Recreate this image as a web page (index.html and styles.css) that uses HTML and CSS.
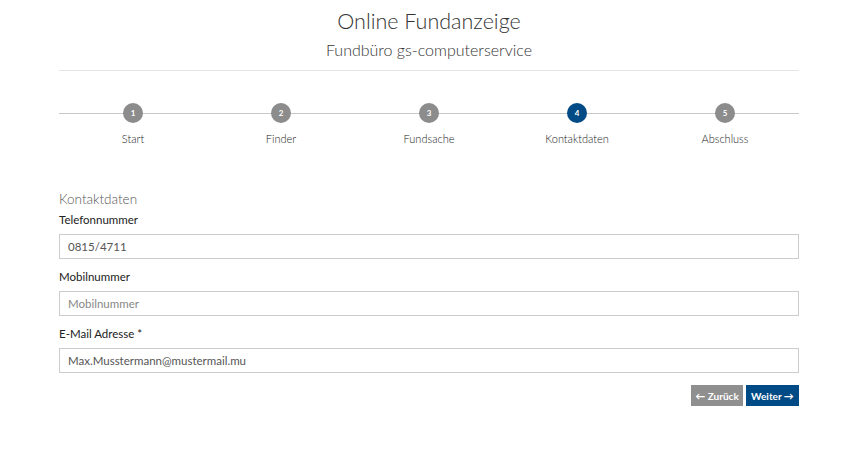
FILE: index.html
```html
<!DOCTYPE html>
<html lang="de">
<head>
<meta charset="utf-8">
<title>Online Fundanzeige</title>
<link rel="stylesheet" href="styles.css">
</head>
<body>
<div class="page">
  <header class="head">
    <h1 class="title">Online Fundanzeige</h1>
    <h2 class="subtitle">Fundbüro gs-computerservice</h2>
  </header>
  <hr class="rule">
  <ol class="steps">
    <li class="step"><span class="dot">1</span><span class="step-label">Start</span></li>
    <li class="step"><span class="dot">2</span><span class="step-label">Finder</span></li>
    <li class="step"><span class="dot">3</span><span class="step-label">Fundsache</span></li>
    <li class="step active"><span class="dot">4</span><span class="step-label">Kontaktdaten</span></li>
    <li class="step"><span class="dot">5</span><span class="step-label">Abschluss</span></li>
  </ol>
  <form class="form">
    <div class="legend">Kontaktdaten</div>
    <div class="group">
      <label class="label">Telefonnummer</label>
      <input class="input" type="text" value="0815/4711">
    </div>
    <div class="group">
      <label class="label">Mobilnummer</label>
      <input class="input" type="text" placeholder="Mobilnummer">
    </div>
    <div class="group">
      <label class="label">E-Mail Adresse *</label>
      <input class="input" type="text" value="Max.Musstermann@mustermail.mu">
    </div>
    <div class="actions">
      <button type="button" class="btn btn-back">&larr; Zurück</button>
      <button type="button" class="btn btn-next">Weiter &rarr;</button>
    </div>
  </form>
</div>
</body>
</html>
```
FILE: styles.css
```css
* { box-sizing: border-box; }
html, body { margin: 0; padding: 0; background: #fff; }
body { font-family: Lato, "Open Sans", sans-serif; color: #333; }
.page { width: 740px; margin-left: 59px; padding-top: 6px; }
.head { text-align: center; }
.title { margin: 0; font-size: 21.5px; line-height: 30px; font-weight: 300; color: #333; }
.subtitle { margin: 4px 0 0; font-size: 16px; line-height: 20px; font-weight: 300; color: #333; }
.rule { margin: 10px 0 0; border: 0; height: 1px; background: #e5e5e5; }
.steps {
  list-style: none; margin: 32px 0 0; padding: 0;
  display: grid; grid-template-columns: repeat(5, 1fr);
  background: linear-gradient(#c8c8c8, #c8c8c8) no-repeat 0 10px / 100% 1px;
}
.step { display: flex; flex-direction: column; align-items: center; }
.dot {
  width: 20px; height: 20px; border-radius: 50%;
  background: #8c8c8c; color: #fff;
  font-size: 8px; font-weight: 700; line-height: 20px; text-align: center;
}
.step.active .dot { background: #004a85; }
.step-label { margin-top: 9px; font-size: 11px; line-height: 14px; font-weight: 300; color: #222; }
.form { margin-top: 44px; }
.legend { font-size: 13.5px; line-height: 18px; font-weight: 300; color: #555; margin-bottom: 4px; }
.group { margin-bottom: 10px; }
.label { display: block; font-size: 11.5px; line-height: 16px; color: #222; margin-bottom: 6px; }
.input {
  display: block; width: 100%; height: 25px; margin: 0;
  border: 1px solid #ccc; border-radius: 0; padding: 0 8px;
  font-family: Lato, "Open Sans", sans-serif; font-size: 11.5px; color: #555; background: #fff;
}
.input::placeholder { color: #888; }
.actions { display: flex; justify-content: flex-end; gap: 3px; margin-top: 12px; }
.btn {
  height: 21px; border: 0; border-radius: 0; padding: 0;
  white-space: nowrap; text-align: center;
  font-family: Lato, "Open Sans", sans-serif; font-size: 10px; font-weight: 700; color: #fff;
}
.btn-back { background: #8f8f8f; width: 52px; }
.btn-next { background: #004a85; width: 53px; }
```
